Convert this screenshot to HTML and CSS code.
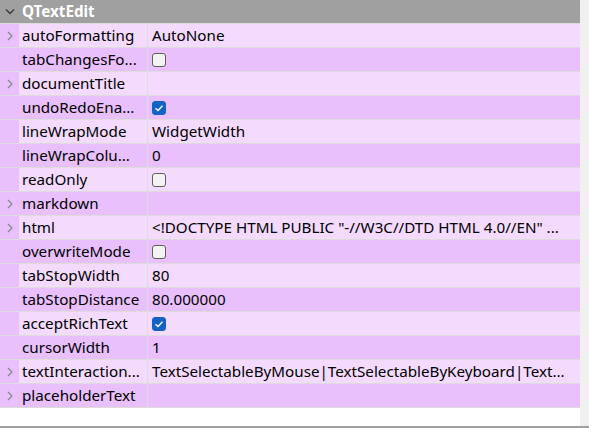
FILE: index.html
```html
<!DOCTYPE html>
<html>
<head>
<meta charset="utf-8">
<link rel="stylesheet" href="styles.css">
</head>
<body>
<div class="window">
  <div class="panel">
    <div class="header">
      <span class="hdr-arrow"><svg width="10" height="7" viewBox="0 0 10 7"><path d="M1 1.5 L5 5.5 L9 1.5" fill="none" stroke="#3a3a3a" stroke-width="1.4"/></svg></span>
      <span class="hdr-title">QTextEdit</span>
    </div>
    <div class="rows">
      <div class="row light"><span class="branch"><svg class="chev" width="6" height="10" viewBox="0 0 6 10"><path d="M1 1 L5 5 L1 9" fill="none" stroke="#8a8a8a" stroke-width="1.3"/></svg></span><span class="name">autoFormatting</span><span class="value">AutoNone</span></div>
      <div class="row dark"><span class="branch"></span><span class="name">tabChangesFo...</span><span class="value"><span class="cb"></span></span></div>
      <div class="row light"><span class="branch"><svg class="chev" width="6" height="10" viewBox="0 0 6 10"><path d="M1 1 L5 5 L1 9" fill="none" stroke="#8a8a8a" stroke-width="1.3"/></svg></span><span class="name">documentTitle</span><span class="value"></span></div>
      <div class="row dark"><span class="branch"></span><span class="name">undoRedoEna...</span><span class="value"><span class="cb on"><svg width="10" height="8" viewBox="0 0 10 8"><path d="M1.5 4.2 L4 6.5 L8.5 1.8" fill="none" stroke="#fff" stroke-width="1.3"/></svg></span></span></div>
      <div class="row light"><span class="branch"></span><span class="name">lineWrapMode</span><span class="value">WidgetWidth</span></div>
      <div class="row dark"><span class="branch"></span><span class="name">lineWrapColu...</span><span class="value">0</span></div>
      <div class="row light"><span class="branch"></span><span class="name">readOnly</span><span class="value"><span class="cb"></span></span></div>
      <div class="row dark"><span class="branch"><svg class="chev" width="6" height="10" viewBox="0 0 6 10"><path d="M1 1 L5 5 L1 9" fill="none" stroke="#8a8a8a" stroke-width="1.3"/></svg></span><span class="name">markdown</span><span class="value"></span></div>
      <div class="row light"><span class="branch"><svg class="chev" width="6" height="10" viewBox="0 0 6 10"><path d="M1 1 L5 5 L1 9" fill="none" stroke="#8a8a8a" stroke-width="1.3"/></svg></span><span class="name">html</span><span class="value">&lt;!DOCTYPE HTML PUBLIC "-//W3C//DTD HTML 4.0//EN" ...</span></div>
      <div class="row dark"><span class="branch"></span><span class="name">overwriteMode</span><span class="value"><span class="cb"></span></span></div>
      <div class="row light"><span class="branch"></span><span class="name">tabStopWidth</span><span class="value">80</span></div>
      <div class="row dark"><span class="branch"></span><span class="name">tabStopDistance</span><span class="value">80.000000</span></div>
      <div class="row light"><span class="branch"></span><span class="name">acceptRichText</span><span class="value"><span class="cb on"><svg width="10" height="8" viewBox="0 0 10 8"><path d="M1.5 4.2 L4 6.5 L8.5 1.8" fill="none" stroke="#fff" stroke-width="1.3"/></svg></span></span></div>
      <div class="row dark"><span class="branch"></span><span class="name">cursorWidth</span><span class="value">1</span></div>
      <div class="row light"><span class="branch"><svg class="chev" width="6" height="10" viewBox="0 0 6 10"><path d="M1 1 L5 5 L1 9" fill="none" stroke="#8a8a8a" stroke-width="1.3"/></svg></span><span class="name">textInteraction...</span><span class="value">TextSelectableByMouse|TextSelectableByKeyboard|Text...</span></div>
      <div class="row dark"><span class="branch"><svg class="chev" width="6" height="10" viewBox="0 0 6 10"><path d="M1 1 L5 5 L1 9" fill="none" stroke="#8a8a8a" stroke-width="1.3"/></svg></span><span class="name">placeholderText</span><span class="value"></span></div>
    </div>
    <div class="blank"></div>
  </div>
  <div class="scroll"></div>
</div>
<div class="bottom-line"></div>
</body>
</html>
```
FILE: styles.css
```css
html, body {
  margin: 0;
  padding: 0;
  background: #ffffff;
}
body {
  width: 589px;
  height: 428px;
  overflow: hidden;
  font-family: "Noto Sans", "Open Sans", sans-serif;
  font-size: 15.2px;
  color: #000;
}
.window {
  display: flex;
  height: 426px;
}
.panel {
  width: 580px;
  display: flex;
  flex-direction: column;
}
.scroll {
  width: 9px;
  background: #f0f0f0;
}
.header {
  height: 23px;
  background: #a0a0a0;
  border-bottom: 1px solid #dcdcdc;
  display: flex;
  align-items: center;
  color: #ffffff;
  font-weight: bold;
}
.hdr-arrow {
  width: 22px;
  display: flex;
  justify-content: center;
  padding-right: 3px;
  box-sizing: border-box;
}
.hdr-title {
  line-height: 23px;
}
.rows {
  display: flex;
  flex-direction: column;
}
.row {
  height: 23px;
  border-bottom: 1px solid #dcdcdc;
  display: flex;
  align-items: stretch;
  white-space: nowrap;
}
.row.light { background: #f4dbfe; }
.row.dark { background: #e9c0fc; }
.branch {
  width: 19px;
  background: #e9c0fc;
  display: flex;
  align-items: center;
  justify-content: center;
  padding-left: 1px;
  box-sizing: border-box;
}
.name {
  width: 129px;
  padding-left: 3px;
  box-sizing: border-box;
  border-right: 1px solid #dcdcdc;
  line-height: 23px;
  overflow: hidden;
}
.value {
  flex: 1;
  padding-left: 4px;
  line-height: 23px;
  overflow: hidden;
  display: flex;
  align-items: center;
}
.cb {
  width: 14px;
  height: 14px;
  box-sizing: border-box;
  border: 1px solid #5f5f5f;
  border-radius: 3px;
  background: #f3f3f3;
  display: flex;
  align-items: center;
  justify-content: center;
}
.cb.on {
  background: #1463c4;
  border-color: #1463c4;
}
.blank {
  flex: 1;
  background: #ffffff;
}
.bottom-line {
  height: 2px;
  background: #a0a0a0;
  width: 589px;
}
```
